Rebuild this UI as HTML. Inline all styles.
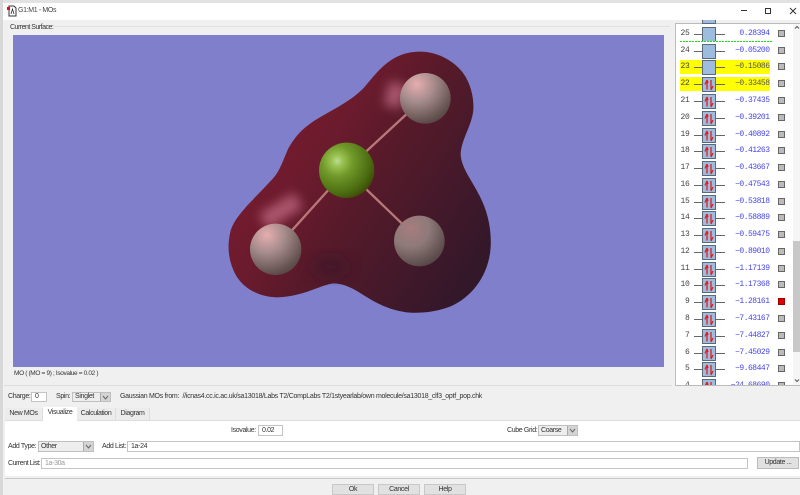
<!DOCTYPE html>
<html><head><meta charset="utf-8">
<style>
html,body{margin:0;padding:0}
body{width:800px;height:495px;overflow:hidden;position:relative;background:#f0f0f0;font-family:"Liberation Sans",sans-serif;font-size:7px;letter-spacing:-.35px;color:#333}
.a{position:absolute;white-space:nowrap}
.in{position:absolute;background:#fff;border:1px solid #c4c4c4;box-sizing:border-box;line-height:9px;padding-left:3px;color:#333;white-space:nowrap}
.dd{position:absolute;background:#eee;border:1px solid #c0c0c0;box-sizing:border-box;line-height:9px;padding-left:2px}
.dd i{position:absolute;right:0;top:0;bottom:0;width:9px;background:#d4d4d4;border-left:1px solid #aaa;display:block}
.dd i svg{display:block;margin:2px 0 0 1px}
.btn{position:absolute;background:#e1e1e1;border:1px solid #c8c8c8;box-sizing:border-box;text-align:center;line-height:10px}
.tab{position:absolute;top:408px;height:12px;background:#ececec;border-right:1px solid #ddd;box-sizing:border-box;line-height:12px;text-align:center}
.row{position:absolute;left:678px;width:108px;height:14px;letter-spacing:0}
.row b{position:absolute;font-weight:normal}
.n{left:0;width:11.500px;text-align:right;font-family:"Liberation Mono",monospace;font-size:8px;line-height:14px;color:#444;letter-spacing:-.3px}
.ln{position:absolute;left:16px;width:31px;top:6.500px;height:1px;background:#666}
.bx{position:absolute;left:24px;top:0;width:14px;height:15px;background:#9dbcde;border:1px solid #5a6a7a;box-sizing:border-box}
.v{left:36px;width:55.500px;text-align:right;font-family:"Liberation Mono",monospace;font-size:8px;line-height:14px;color:#4747e8;letter-spacing:-.5px}
.s{position:absolute;left:100px;top:3px;width:7px;height:7px;background:#bbb;border:1px solid #666;box-sizing:border-box}
.bx svg{display:block}
</style></head><body>

<div class="a" style="left:0;top:0;width:800px;height:20px;background:#fff"></div>
<div class="a" style="left:0;top:0;width:800px;height:3px;background:#e2e2e2"></div>
<div class="a" style="left:0;top:0;width:3px;height:495px;background:#d8d8d8"></div>
<svg class="a" style="left:6px;top:5px" width="11" height="12" viewBox="0 0 11 12"><path d="M3 1h5l2 2v8H3z" fill="#fff" stroke="#333"/><path d="M5 9l1.500-5L8 9" fill="none" stroke="#333" stroke-width=".8"/><rect x="1" y="2" width="3" height="3" fill="#e01010"/></svg>
<div class="a" style="left:18px;top:5px;line-height:11px;color:#444">G1:M1 - MOs</div>
<svg class="a" style="left:735px;top:5px" width="65" height="12" viewBox="0 0 65 12"><path d="M6 5.500h6" stroke="#333"/><rect x="30.500" y="3.500" width="5" height="5" fill="none" stroke="#333"/><path d="M55 3l6 6M61 3l-6 6" stroke="#333"/></svg>

<div class="a" style="left:10px;top:23px;line-height:9px;letter-spacing:-.5px">Current Surface:</div>
<div class="a" style="left:54px;top:26px;width:616px;height:1px;background:#e0e0e0"></div>

<div class="a" style="left:13px;top:35px;width:651px;height:332px;background:#7f7fcb"></div>
<svg class="a" style="left:220px;top:40px" width="280" height="290" viewBox="0 0 840 870">
<defs>
<linearGradient id="bl" x1="0.1" y1="0.25" x2="0.95" y2="0.8">
<stop offset="0" stop-color="#7a1b2e"/><stop offset=".3" stop-color="#6a1b2d"/><stop offset=".5" stop-color="#561a2a"/><stop offset=".75" stop-color="#45192a"/><stop offset="1" stop-color="#33182a"/>
</linearGradient>
<radialGradient id="g" cx=".33" cy=".33" r=".8">
<stop offset="0" stop-color="#bcdc98"/><stop offset=".12" stop-color="#9cc454"/><stop offset=".35" stop-color="#70992a"/><stop offset=".75" stop-color="#4a6a10"/><stop offset="1" stop-color="#3a3a04"/>
</radialGradient>
<radialGradient id="f" cx=".33" cy=".22" r=".9">
<stop offset="0" stop-color="#e6aeb0"/><stop offset=".4" stop-color="#a48a8a"/><stop offset=".8" stop-color="#675552"/><stop offset="1" stop-color="#4e3c3c"/>
</radialGradient>
<radialGradient id="f2" cx=".33" cy=".25" r=".9">
<stop offset="0" stop-color="#a77c7e"/><stop offset=".4" stop-color="#8f7a7a"/><stop offset=".8" stop-color="#5f4f4e"/><stop offset="1" stop-color="#4a3a3a"/>
</radialGradient>
<filter id="b" x="-50%" y="-50%" width="200%" height="200%"><feGaussianBlur stdDeviation="16"/></filter>
<filter id="d" x="-50%" y="-50%" width="200%" height="200%"><feGaussianBlur stdDeviation="22"/></filter>
</defs>
<path d="M600 35C650 35 700 60 730 100C755 135 762 180 760 210C755 260 722 300 722 345C725 385 755 420 780 470C800 510 815 560 812 620C808 700 760 770 690 800C650 815 610 820 570 818C510 812 470 790 430 765C400 745 370 730 340 730C300 735 250 770 170 772C110 770 60 740 40 690C25 655 22 620 30 580C40 530 100 480 150 425C180 395 185 370 205 325C225 290 245 270 265 255C310 220 380 195 430 145C470 100 510 35 600 35Z" fill="url(#bl)"/>
<ellipse cx="330" cy="680" rx="55" ry="28" fill="#3a1826" filter="url(#d)" opacity=".7"/>
<path d="M515 200L535 130M130 545L235 480" stroke="#c9708a" stroke-width="52" fill="none" filter="url(#b)" opacity=".7"/>
<path d="M438 335L560 222M325 450L215 572M438 447L545 550" stroke="#b87878" stroke-width="7" fill="none"/>
<circle cx="380" cy="391" r="83" fill="url(#g)"/>
<circle cx="616" cy="175" r="76" fill="url(#f)"/>
<circle cx="167" cy="628" r="77" fill="url(#f)"/>
<circle cx="598" cy="603" r="76" fill="url(#f2)"/>
</svg>

<div class="a" style="left:14px;top:369px;font-size:6.500px;line-height:9px">MO ( (MO = 9) ; Isovalue = 0.02 )</div>
<div class="a" style="left:4px;top:385px;width:668px;height:1px;background:#ddd"></div>

<!-- MO list -->
<div class="a" style="left:675px;top:23px;width:125px;height:363px;background:#fff;border-left:1px solid #bbb;border-top:1px solid #bbb;border-bottom:1px solid #bbb;box-sizing:border-box"></div>
<div class="a" style="left:793px;top:24px;width:7px;height:361px;background:#f5f5f5"></div>
<div class="a" style="left:793px;top:241px;width:7px;height:111px;background:#c8c8c8"></div>
<svg class="a" style="left:794px;top:25px" width="6" height="5"><path d="M1 3.500L3 1.500L5 3.500" fill="none" stroke="#555"/></svg>
<svg class="a" style="left:794px;top:378px" width="6" height="5"><path d="M1 1.500L3 3.500L5 1.500" fill="none" stroke="#555"/></svg>
<div class="a" style="left:702px;top:20px;width:14px;height:4px;background:#9dbcde;border:1px solid #5a6a7a;border-top:0;box-sizing:border-box"></div>
<div class="a" style="left:680px;top:60px;width:90px;height:14px;background:#ff0"></div>
<div class="a" style="left:680px;top:77px;width:90px;height:14px;background:#ff0"></div>

<svg width="0" height="0" style="position:absolute"><defs><g id="ud"><path d="M4 11.500V2.500M4 2L2 6.500M4 2L5 5M8 2v9.500M8 12L10 8" stroke="#e02020" stroke-width="1.300" fill="none"/></g></defs></svg>

<div class="row" style="top:27px"><b class="n">25</b><span class="ln"></span><span class="bx"></span><b class="v">0.28394</b><span class="s"></span></div>
<div class="row" style="top:44px"><b class="n">24</b><span class="ln"></span><span class="bx"></span><b class="v">&#8722;0.05200</b><span class="s"></span></div>
<div class="row" style="top:60px"><b class="n">23</b><span class="ln"></span><span class="bx"></span><b class="v" style="color:#555">&#8722;0.15086</b><span class="s"></span></div>
<div class="row" style="top:77px"><b class="n">22</b><span class="ln"></span><span class="bx"><svg width="12" height="13"><use href="#ud"/></svg></span><b class="v" style="color:#555">&#8722;0.33458</b><span class="s"></span></div>
<div class="row" style="top:94px"><b class="n">21</b><span class="ln"></span><span class="bx"><svg width="12" height="13"><use href="#ud"/></svg></span><b class="v">&#8722;0.37435</b><span class="s"></span></div>
<div class="row" style="top:111px"><b class="n">20</b><span class="ln"></span><span class="bx"><svg width="12" height="13"><use href="#ud"/></svg></span><b class="v">&#8722;0.39201</b><span class="s"></span></div>
<div class="row" style="top:128px"><b class="n">19</b><span class="ln"></span><span class="bx"><svg width="12" height="13"><use href="#ud"/></svg></span><b class="v">&#8722;0.40892</b><span class="s"></span></div>
<div class="row" style="top:144px"><b class="n">18</b><span class="ln"></span><span class="bx"><svg width="12" height="13"><use href="#ud"/></svg></span><b class="v">&#8722;0.41263</b><span class="s"></span></div>
<div class="row" style="top:161px"><b class="n">17</b><span class="ln"></span><span class="bx"><svg width="12" height="13"><use href="#ud"/></svg></span><b class="v">&#8722;0.43667</b><span class="s"></span></div>
<div class="row" style="top:178px"><b class="n">16</b><span class="ln"></span><span class="bx"><svg width="12" height="13"><use href="#ud"/></svg></span><b class="v">&#8722;0.47543</b><span class="s"></span></div>
<div class="row" style="top:195px"><b class="n">15</b><span class="ln"></span><span class="bx"><svg width="12" height="13"><use href="#ud"/></svg></span><b class="v">&#8722;0.53818</b><span class="s"></span></div>
<div class="row" style="top:211px"><b class="n">14</b><span class="ln"></span><span class="bx"><svg width="12" height="13"><use href="#ud"/></svg></span><b class="v">&#8722;0.58889</b><span class="s"></span></div>
<div class="row" style="top:228px"><b class="n">13</b><span class="ln"></span><span class="bx"><svg width="12" height="13"><use href="#ud"/></svg></span><b class="v">&#8722;0.59475</b><span class="s"></span></div>
<div class="row" style="top:245px"><b class="n">12</b><span class="ln"></span><span class="bx"><svg width="12" height="13"><use href="#ud"/></svg></span><b class="v">&#8722;0.89010</b><span class="s"></span></div>
<div class="row" style="top:262px"><b class="n">11</b><span class="ln"></span><span class="bx"><svg width="12" height="13"><use href="#ud"/></svg></span><b class="v">&#8722;1.17139</b><span class="s"></span></div>
<div class="row" style="top:278px"><b class="n">10</b><span class="ln"></span><span class="bx"><svg width="12" height="13"><use href="#ud"/></svg></span><b class="v">&#8722;1.17368</b><span class="s"></span></div>
<div class="row" style="top:295px"><b class="n">9</b><span class="ln"></span><span class="bx"><svg width="12" height="13"><use href="#ud"/></svg></span><b class="v">&#8722;1.28161</b><span class="s" style="background:#e00000;border-color:#900"></span></div>
<div class="row" style="top:312px"><b class="n">8</b><span class="ln"></span><span class="bx"><svg width="12" height="13"><use href="#ud"/></svg></span><b class="v">&#8722;7.43167</b><span class="s"></span></div>
<div class="row" style="top:329px"><b class="n">7</b><span class="ln"></span><span class="bx"><svg width="12" height="13"><use href="#ud"/></svg></span><b class="v">&#8722;7.44827</b><span class="s"></span></div>
<div class="row" style="top:346px"><b class="n">6</b><span class="ln"></span><span class="bx"><svg width="12" height="13"><use href="#ud"/></svg></span><b class="v">&#8722;7.45029</b><span class="s"></span></div>
<div class="row" style="top:362px"><b class="n">5</b><span class="ln"></span><span class="bx"><svg width="12" height="13"><use href="#ud"/></svg></span><b class="v">&#8722;9.68447</b><span class="s"></span></div>
<div class="a" style="left:676px;top:379px;width:117px;height:6px;overflow:hidden">
<div class="row" style="left:2px;top:0"><b class="n">4</b><span class="ln"></span><span class="bx"><svg width="12" height="13"><use href="#ud"/></svg></span><b class="v">&#8722;24.68690</b><span class="s"></span></div>
</div>
<div class="a" style="left:680px;top:41px;width:93px;height:1px;background:repeating-linear-gradient(90deg,#16e016 0 2px,#fff 2px 3px)"></div>

<!-- charge/spin row -->
<div class="a" style="left:8px;top:392px;line-height:9px">Charge:</div>
<div class="in" style="left:31px;top:392px;width:16px;height:10px;line-height:8px">0</div>
<div class="a" style="left:56px;top:392px;line-height:9px">Spin:</div>
<div class="dd" style="left:72px;top:392px;width:39px;height:10px;line-height:8px">Singlet<i><svg width="7" height="5"><path d="M1 1L3.500 4L6 1" fill="none" stroke="#666"/></svg></i></div>
<div class="a" style="left:120px;top:392px;line-height:9px;letter-spacing:-.28px">Gaussian MOs from: &nbsp;//icnas4.cc.ic.ac.uk/sa13018/Labs T2/CompLabs T2/1styearlab/own molecule/sa13018_clf3_optf_pop.chk</div>

<!-- tabs -->
<div class="a" style="left:5px;top:420px;width:795px;height:56px;background:#fff"></div>
<div class="a" style="left:5px;top:478px;width:795px;height:1px;background:#c8c8c8"></div>
<div class="tab" style="left:5px;width:38px">New MOs</div>
<div class="tab" style="left:43px;top:407px;width:34px;height:14px;background:#fff;border:0">Visualize</div>
<div class="tab" style="left:77px;width:39px">Calculation</div>
<div class="tab" style="left:116px;width:34px">Diagram</div>
<div class="a" style="left:5px;top:420px;width:38px;height:1px;background:#ddd"></div>
<div class="a" style="left:77px;top:420px;width:723px;height:1px;background:#ddd"></div>

<div class="a" style="left:231px;top:426px;line-height:9px">Isovalue:</div>
<div class="in" style="left:258px;top:425px;width:25px;height:11px">0.02</div>
<div class="a" style="left:507px;top:426px;line-height:9px">Cube Grid:</div>
<div class="dd" style="left:538px;top:425px;width:40px;height:11px">Coarse<i><svg width="7" height="5"><path d="M1 1L3.500 4L6 1" fill="none" stroke="#666"/></svg></i></div>

<div class="a" style="left:8px;top:442px;line-height:9px">Add Type:</div>
<div class="dd" style="left:38px;top:441px;width:56px;height:11px">Other<i><svg width="7" height="5"><path d="M1 1L3.500 4L6 1" fill="none" stroke="#666"/></svg></i></div>
<div class="a" style="left:102px;top:442px;line-height:9px">Add List:</div>
<div class="in" style="left:127px;top:441px;width:673px;height:11px">1a-24</div>

<div class="a" style="left:8px;top:459px;line-height:9px;letter-spacing:-.45px">Current List:</div>
<div class="in" style="left:41px;top:458px;width:707px;height:11px;color:#999">1a-30a</div>
<div class="btn" style="left:757px;top:457px;width:42px;height:12px;border-color:#bbb">Update ...</div>

<div class="btn" style="left:332px;top:484px;width:42px;height:11px">Ok</div>
<div class="btn" style="left:378px;top:484px;width:42px;height:11px">Cancel</div>
<div class="btn" style="left:424px;top:484px;width:42px;height:11px">Help</div>

</body></html>
